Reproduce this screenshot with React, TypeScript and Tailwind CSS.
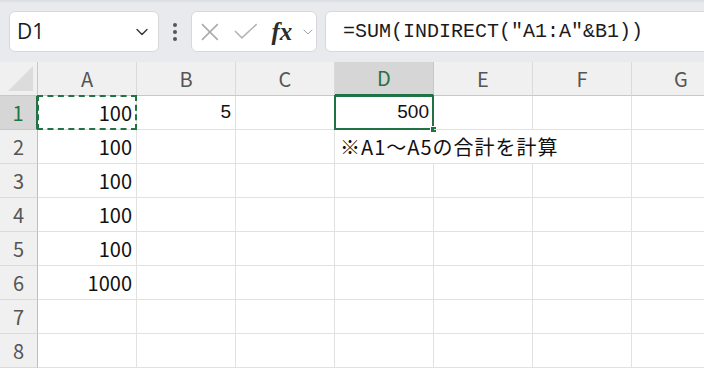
import React from 'react';
import { ChevronDown } from 'lucide-react';

const COLS = ['A', 'B', 'C', 'D', 'E', 'F', 'G'];
const ROWS = [1, 2, 3, 4, 5, 6, 7, 8];

const cellFont = { fontFamily: '"Noto Sans CJK JP", "Noto Sans", sans-serif' };
const numFont = { fontFamily: '"Liberation Sans", Arial, sans-serif' };

const values: Record<string, React.ReactNode> = {
  A1: '100',
  A2: '100',
  A3: '100',
  A4: '100',
  A5: '100',
  A6: '1000',
};

const Toolbar: React.FC = () => (
  <div className="flex flex-col bg-[#e8eaee] h-[62px]">
    <div className="h-[3px] bg-gradient-to-b from-[#d9dce1] to-[#e8eaee]" />
    <div className="flex items-center pt-[8px] pl-[9px]">
      <div className="shrink-0 flex items-center justify-between w-[150px] h-[41px] bg-white rounded-[6px] border border-[#d6d8dc] pl-[7px] pr-[6px]">
        <span className="text-[21px] text-[#1b1b1b]" style={{ fontFamily: '"Open Sans", "Noto Sans", sans-serif' }}>D1</span>
        <ChevronDown size={20} strokeWidth={1.6} className="text-[#333]" />
      </div>
      <div className="shrink-0 w-[32px] flex flex-col items-center gap-[3px]">
        <span className="w-[4px] h-[4px] rounded-full bg-[#555]" />
        <span className="w-[4px] h-[4px] rounded-full bg-[#555]" />
        <span className="w-[4px] h-[4px] rounded-full bg-[#555]" />
      </div>
      <div className="shrink-0 flex items-center w-[126px] h-[41px] bg-white rounded-[6px] border border-[#d6d8dc] pl-[8px]">
        <svg width="20" height="20" viewBox="0 0 20 20" className="mr-[14px]">
          <path d="M2 2 L18 18 M18 2 L2 18" stroke="#ababab" strokeWidth="1.6" fill="none" />
        </svg>
        <svg width="24" height="18" viewBox="0 0 24 18" className="mr-[14px]">
          <path d="M1 8 L8 15 L23 1" stroke="#b5b5b5" strokeWidth="1.6" fill="none" />
        </svg>
        <span className="italic text-[25px] leading-none text-[#2b2b2b] font-bold" style={{ fontFamily: '"Liberation Serif", "DejaVu Serif", serif' }}>fx</span>
        <ChevronDown size={16} strokeWidth={1.5} className="text-[#9a9a9a] ml-[8px]" />
      </div>
      <div className="shrink-0 flex items-center w-[400px] h-[41px] ml-[8px] bg-white rounded-l-[6px] border border-[#d6d8dc] pl-[17px]">
        <span className="text-[20px] text-[#1b1b1b] whitespace-nowrap" style={{ fontFamily: '"Liberation Mono", "DejaVu Sans Mono", monospace' }}>
          =SUM(INDIRECT("A1:A"&amp;B1))
        </span>
      </div>
    </div>
  </div>
);

const Cell: React.FC<{ col: string; row: number }> = ({ col, row }) => {
  const key = `${col}${row}`;
  const noRight = key === 'D2' || key === 'E2';
  let content: React.ReactNode = values[key] ?? null;
  let cls = 'justify-end pr-[4px]';
  let font: React.CSSProperties = cellFont;
  if (key === 'B1') {
    content = '5';
    font = numFont;
  }
  if (key === 'D1') {
    content = '500';
    font = numFont;
  }
  if (key === 'D2') {
    content = '※A1～A5の合計を計算';
    cls = 'justify-start pl-[5px]';
  }
  const isB = key === 'B1' || key === 'D1';
  return (
    <div
      className={`relative flex items-center h-[34px] border-b border-[#e1e1e1] ${noRight ? '' : 'border-r'} ${cls}`}
    >
      {content !== null && (
        <span
          className={`whitespace-nowrap text-[#111] ${isB ? 'text-[19px] font-medium' : 'text-[20px]'} ${key === 'D2' ? 'tracking-[1px] text-[19px]' : ''}`}
          style={font}
        >
          {content}
        </span>
      )}
      {key === 'A1' && (
        <div className="absolute -left-px -top-px -right-px -bottom-px border-2 border-dashed border-[#217346]" />
      )}
      {key === 'D1' && (
        <>
          <div className="absolute -left-px -top-px -right-px -bottom-px border-2 border-[#217346]" />
          <div className="absolute -right-[4px] -bottom-[4px] w-[7px] h-[7px] bg-[#217346] border border-white" />
        </>
      )}
    </div>
  );
};

const App: React.FC = () => {
  return (
    <div className="w-[704px] h-[369px] overflow-hidden bg-white">
      <Toolbar />
      <div className="grid grid-cols-[38px_repeat(7,99px)]">
        <div className="h-[34px] bg-[#f0f0f0] border-r border-b border-[#c8c8c8] flex items-end justify-end pr-[3px] pb-[3px]">
          <svg width="26" height="26" viewBox="0 0 26 26">
            <polygon points="25,0 25,25 0,25" fill="#dcdcdc" />
          </svg>
        </div>
        {COLS.map((c) => (
          <div
            key={c}
            className={`h-[34px] flex items-center justify-center text-[20px] border-r ${
              c === 'D'
                ? 'bg-[#d6d6d6] text-[#217346] border-b-2 border-b-[#217346] border-r-[#c8c8c8]'
                : 'bg-[#f0f0f0] text-[#555] border-b border-b-[#c8c8c8] border-r-[#dadada]'
            }`}
            style={cellFont}
          >
            {c}
          </div>
        ))}
        {ROWS.map((r) => (
          <React.Fragment key={r}>
            <div
              className={`h-[34px] flex items-center justify-center text-[20px] border-b ${
                r === 1
                  ? 'bg-[#d6d6d6] text-[#217346] border-r-2 border-r-[#217346] border-b-[#c8c8c8]'
                  : 'bg-[#f0f0f0] text-[#555] border-r border-r-[#bdbdbd] border-b-[#dadada]'
              }`}
              style={cellFont}
            >
              {r}
            </div>
            {COLS.map((c) => (
              <Cell key={c} col={c} row={r} />
            ))}
          </React.Fragment>
        ))}
      </div>
    </div>
  );
};

export default App;
